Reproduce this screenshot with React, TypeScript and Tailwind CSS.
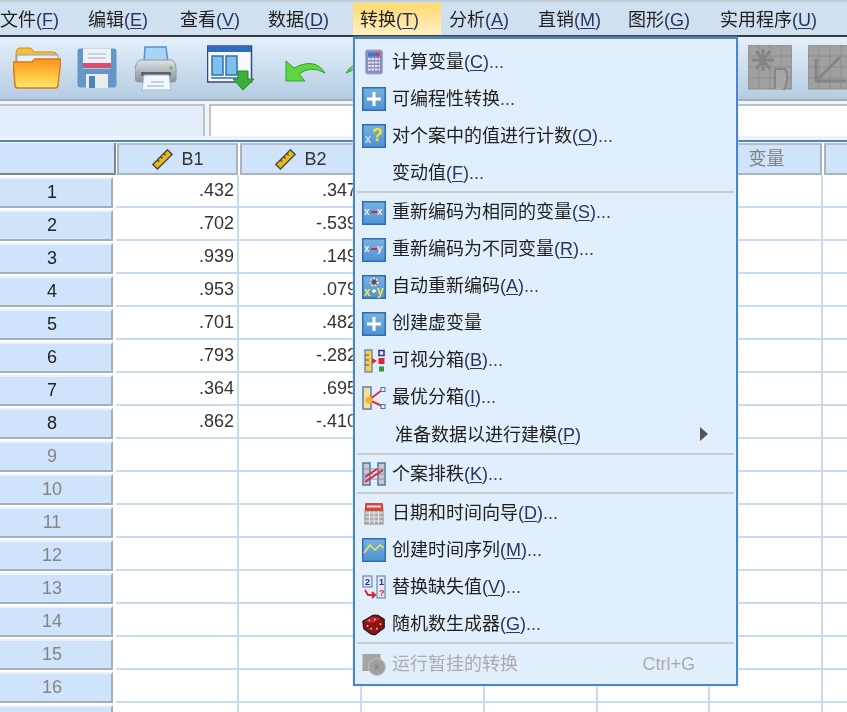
import type { ReactNode } from "react";

const FONT = "font-['Liberation_Sans','Noto_Sans_CJK_SC',sans-serif]";

const menus = [
  { label: "文件", key: "F", cls: "w-[88px]" },
  { label: "编辑", key: "E", cls: "w-[92px]" },
  { label: "查看", key: "V", cls: "w-[88px]" },
  { label: "数据", key: "D", cls: "w-[92px]" },
  { label: "转换", key: "T", cls: "w-[88px] mr-px bg-gradient-to-b from-[#ffd968] to-[#fff0c4]" },
  { label: "分析", key: "A", cls: "w-[89px]" },
  { label: "直销", key: "M", cls: "w-[90px]" },
  { label: "图形", key: "G", cls: "w-[92px]" },
  { label: "实用程序", key: "U", cls: "w-[130px]" },
];

const data = [
  [".432", ".347"],
  [".702", "-.539"],
  [".939", ".149"],
  [".953", ".079"],
  [".701", ".482"],
  [".793", "-.282"],
  [".364", ".695"],
  [".862", "-.410"],
];

const rows = Array.from({ length: 17 }, (_, i) => i + 1);

// toolbar drawings
function FolderIcon() {
  return (
    <svg width="48" height="44" viewBox="0 0 48 44" className="shrink-0">
      <path d="M3 8 Q3 2 7 2 H18 L21 6 H40 Q44 6 44 10 V18 H3Z" fill="#f9bd3a" stroke="#d48a1c" />
      <rect x="4" y="9" width="41" height="14" fill="#e8f0fa" stroke="#7fa6d0" />
      <path d="M0 16 H19 L22 13 H48 L45 39 Q45 42 42 42 H5 Q2 42 2 39Z" fill="url(#folderFill)" stroke="#dc7a10" strokeWidth="1.5" />
    </svg>
  );
}

function SaveIcon() {
  return (
    <svg width="40" height="40" viewBox="0 0 40 40" className="shrink-0">
      <rect x="0.5" y="0.5" width="39" height="39" rx="3" fill="#6496c8" />
      <rect x="6" y="0.5" width="28" height="20" fill="#eef2f6" />
      <rect x="6" y="15" width="28" height="5" fill="#d9506f" />
      <path d="M11 6 H29 M11 10 H29" stroke="#c0c8d0" strokeWidth="1.5" />
      <rect x="9" y="26" width="22" height="14" fill="#e8edf2" />
      <rect x="12" y="28" width="6" height="12" fill="#4f82b5" />
    </svg>
  );
}

function PrinterIcon() {
  return (
    <svg width="42" height="47" viewBox="0 0 42 47" className="shrink-0">
      <path d="M9 18 L10 2 H31 L33 18Z" fill="#a9d4f5" stroke="#4d94d6" strokeWidth="1.5" />
      <path d="M5 15 H37 Q41 17 41 24 V35 Q41 37 38 37 H4 Q0 37 0 33 V24 Q1 17 5 15Z" fill="url(#printerFill)" stroke="#8f979e" />
      <circle cx="36" cy="23" r="1.8" fill="#55c45e" />
      <rect x="6" y="27" width="30" height="4" fill="#59636b" />
      <path d="M9 30 H34 L36 45 H7Z" fill="#f3f7fb" stroke="#aab6c2" />
      <path d="M16 37 H29 M12 41 H29" stroke="#a6c4e2" strokeWidth="1.5" />
    </svg>
  );
}

function DataEditorIcon() {
  return (
    <svg width="47" height="46" viewBox="0 0 47 46" className="shrink-0">
      <rect x="0.5" y="1" width="44" height="36" fill="#f7f9fd" stroke="#3a4686" strokeWidth="1.5" />
      <rect x="1" y="1" width="43" height="6" fill="#2f6cc0" />
      <rect x="5" y="11" width="11" height="19" fill="#7dc0ec" stroke="#2f6cc0" strokeWidth="1.5" />
      <rect x="19" y="11" width="11" height="19" fill="#7dc0ec" stroke="#2f6cc0" strokeWidth="1.5" />
      <path d="M4 33 H33" stroke="#2f6cc0" strokeWidth="1.5" />
      <path d="M31 26 H41 V34 H47 L36 45 L26 34 H31Z" fill="#3cae3c" stroke="#1f8a2a" />
    </svg>
  );
}

function UndoIcon() {
  return (
    <svg width="41" height="24" viewBox="0 0 41 24" className="shrink-0">
      <path d="M1 3 L1 23 H20 L14 16 Q26 7 40 15 Q30 -1 9 10Z" fill="#5fd63f" stroke="#2da32f" />
    </svg>
  );
}

function RedoIcon() {
  return (
    <svg width="41" height="24" viewBox="0 0 41 24" className="shrink-0">
      <path d="M40 3 L40 23 H21 L27 16 Q15 7 1 15 Q11 -1 32 10Z" fill="#5fd63f" stroke="#2da32f" />
    </svg>
  );
}

function GreyGridIcon({ children }: { children: ReactNode }) {
  return (
    <svg width="44" height="46" viewBox="0 0 44 46" className="shrink-0">
      <rect x="0" y="0" width="44" height="44" fill="#a0a0a0" stroke="#8c8c8c" />
      <path d="M0 11 H44 M0 22 H44 M0 33 H44 M11 0 V44 M22 0 V44 M33 0 V44" stroke="#8e8e8e" />
      {children}
    </svg>
  );
}

function RulerIcon() {
  return (
    <svg width="22" height="24" viewBox="0 0 24 24" className="shrink-0">
      <path d="M2 18 L18 2 L23 7 L7 23Z" fill="#e8b820" stroke="#4a4a38" strokeWidth="1.5" />
      <path d="M7 13 L9 15 M10.5 9.5 L12.5 11.5 M14 6 L16 8" stroke="#4a4a38" strokeWidth="1.5" />
    </svg>
  );
}

// menu drawings
function Calculator() {
  return (
    <svg width="24" height="26" viewBox="0 0 24 26">
      <rect x="3.5" y="1" width="17" height="24" rx="2" fill="#8d8cc0" stroke="#a9a8d0" />
      <rect x="6" y="3.5" width="12" height="4" fill="#3e78c8" />
      <rect x="14" y="4" width="4" height="3" fill="#d84050" />
      <path d="M6 10 H18 M6 13.5 H18 M6 17 H18 M6 20.5 H18" stroke="#e6e6f4" strokeWidth="2" strokeDasharray="2.5 1" />
    </svg>
  );
}

function BlueBox({ children }: { children?: ReactNode }) {
  return (
    <svg width="24" height="24" viewBox="0 0 24 24">
      <rect x="0.75" y="0.75" width="22.5" height="22.5" fill="url(#boxFill)" stroke="#2e6db8" strokeWidth="1.5" />
      {children}
    </svg>
  );
}

const plus = <path d="M12 5 V19 M5 12 H19" stroke="#ffffff" strokeWidth="3" />;

function Label({ x, y, fill, size, bold, children }: { x: number; y: number; fill: string; size: number; bold?: boolean; children: ReactNode }) {
  return (
    <text x={x} y={y} fill={fill} fontSize={size} fontWeight={bold ? 700 : 400} fontFamily="Liberation Sans">
      {children}
    </text>
  );
}

function VisualBin() {
  return (
    <svg width="24" height="24" viewBox="0 0 24 24">
      <rect x="3" y="1" width="7" height="22" fill="#f2cf4e" stroke="#7c8ba6" strokeWidth="1.5" />
      <path d="M3 6 H7 M3 11 H7 M3 16 H7" stroke="#555555" />
      <path d="M10 9 L15 12 L10 15Z" fill="#d8283c" />
      <rect x="17" y="1.5" width="5" height="5" fill="none" stroke="#24309a" strokeWidth="1.5" />
      <rect x="16.5" y="9" width="6" height="6" fill="#d8283c" />
      <rect x="17" y="17.5" width="5" height="5" fill="#2f9a40" />
    </svg>
  );
}

function OptimalBin() {
  return (
    <svg width="24" height="24" viewBox="0 0 24 24">
      <rect x="1" y="1" width="8" height="22" fill="#f4e29a" stroke="#5a7ea8" strokeWidth="1.5" />
      <path d="M7 14 L20 4 M7 14 L20 20" stroke="#e0303c" strokeWidth="2" />
      <circle cx="7" cy="14" r="3.5" fill="#ffb020" />
      <rect x="19" y="1.5" width="4" height="4" fill="#e1eefb" stroke="#4a78b0" />
      <rect x="19" y="18.5" width="4" height="4" fill="#e1eefb" stroke="#4a78b0" />
    </svg>
  );
}

function CaseRank() {
  return (
    <svg width="24" height="24" viewBox="0 0 24 24">
      <rect x="1" y="1" width="7" height="22" fill="#c8c8d0" stroke="#4f78a8" strokeWidth="1.5" />
      <rect x="16" y="1" width="7" height="22" fill="#c8c8d0" stroke="#4f78a8" strokeWidth="1.5" />
      <path d="M1 7 H23 M1 12 H23 M1 17 H23" stroke="#8896a8" />
      <path d="M3 20 L21 8 M3 15 L15 7" stroke="#d8283c" strokeWidth="2" />
    </svg>
  );
}

function CalendarIcon() {
  return (
    <svg width="24" height="24" viewBox="0 0 24 24">
      <rect x="3" y="8" width="18" height="15" fill="#aeaeae" stroke="#8a8a8a" />
      <path d="M3 12 H21 M3 16 H21 M3 20 H21 M7.5 9 V23 M12 9 V23 M16.5 9 V23" stroke="#e8e8e8" />
      <rect x="3" y="2" width="18" height="8" rx="1" fill="#d8463c" />
      <rect x="5" y="4.5" width="14" height="2" fill="#ffd8d0" />
    </svg>
  );
}

function ReplaceIcon() {
  return (
    <svg width="24" height="24" viewBox="0 0 24 24">
      <rect x="1" y="1" width="9" height="11" fill="#dfe8f4" stroke="#4f78a8" />
      <rect x="15" y="1" width="8" height="22" fill="#dfe8f4" stroke="#4f78a8" />
      <Label x={3} y={10} fill="#20308a" size={9} bold>2</Label>
      <Label x={17} y={10} fill="#20308a" size={9} bold>1</Label>
      <Label x={17} y={21} fill="#d8283c" size={9} bold>?</Label>
      <path d="M3 15 L6 20 H13 M10 17 L13 20 L10 23" fill="none" stroke="#e02030" strokeWidth="2" />
    </svg>
  );
}

function DiceIcon() {
  return (
    <svg width="26" height="24" viewBox="0 0 26 24">
      <path d="M1 8 L11 2 Q14 1 18 2 L24 6 L24 15 L15 22 Q12 23 9 21 L2 16Z" fill="#8e1414" stroke="#2a1a1a" strokeWidth="1.5" />
      <path d="M3 8 L11 3 L20 5 L12 10Z" fill="#c02626" />
      <g fill="#f0c8c8">
        <circle cx="8" cy="7" r="1" />
        <circle cx="14" cy="6" r="1" />
        <circle cx="6" cy="13" r="1" />
        <circle cx="10" cy="16" r="1" />
        <circle cx="16" cy="16" r="1" />
        <circle cx="20" cy="11" r="1" />
      </g>
    </svg>
  );
}

function PendingIcon() {
  return (
    <svg width="24" height="24" viewBox="0 0 24 24">
      <rect x="0.5" y="1" width="18" height="17" fill="#a4a4a4" />
      <circle cx="15" cy="14" r="8.5" fill="#a0a0a0" stroke="#c4c4c4" />
      <path d="M13 10 L18 14 L13 18Z" fill="#8c8c8c" />
    </svg>
  );
}

type Item = { label: string; hot?: string; dots?: boolean; icon?: ReactNode; sep?: boolean; cls?: string };

const menuItems: Item[] = [
  { label: "计算变量", hot: "C", dots: true, icon: <Calculator /> },
  { label: "可编程性转换", dots: true, icon: <BlueBox>{plus}</BlueBox> },
  {
    label: "对个案中的值进行计数",
    hot: "O",
    dots: true,
    icon: (
      <BlueBox>
        <Label x={3} y={19} fill="#e6eef6" size={12}>x</Label>
        <Label x={10} y={17} fill="#f8e820" size={18} bold>?</Label>
      </BlueBox>
    ),
  },
  { label: "变动值", hot: "F", dots: true },
  { sep: true, label: "" },
  {
    label: "重新编码为相同的变量",
    hot: "S",
    dots: true,
    icon: (
      <BlueBox>
        <Label x={2} y={14} fill="#e6eef6" size={10} bold>x</Label>
        <path d="M9 11 H15" stroke="#d8283c" strokeWidth="2" />
        <Label x={15} y={14} fill="#e6eef6" size={10} bold>x</Label>
      </BlueBox>
    ),
  },
  {
    label: "重新编码为不同变量",
    hot: "R",
    dots: true,
    icon: (
      <BlueBox>
        <Label x={2} y={14} fill="#e6eef6" size={10} bold>x</Label>
        <path d="M9 11 H15" stroke="#d8283c" strokeWidth="2" />
        <Label x={15} y={14} fill="#e6eef6" size={10} bold>y</Label>
      </BlueBox>
    ),
  },
  {
    label: "自动重新编码",
    hot: "A",
    dots: true,
    icon: (
      <BlueBox>
        <circle cx="12" cy="7" r="3.5" fill="#555555" stroke="#e4e4e4" strokeWidth="2" strokeDasharray="2 1" />
        <Label x={2} y={21} fill="#f4e84a" size={12} bold>x</Label>
        <path d="M10 16 H14 M12 14 V18" stroke="#ffffff" strokeWidth="1.5" />
        <Label x={15} y={20} fill="#f4e84a" size={12} bold>y</Label>
      </BlueBox>
    ),
  },
  { label: "创建虚变量", icon: <BlueBox>{plus}</BlueBox> },
  { label: "可视分箱", hot: "B", dots: true, icon: <VisualBin /> },
  { label: "最优分箱", hot: "I", dots: true, icon: <OptimalBin /> },
  { label: "准备数据以进行建模", hot: "P", cls: "ml-[3px]" },
  { sep: true, label: "" },
  { label: "个案排秩", hot: "K", dots: true, icon: <CaseRank /> },
  { sep: true, label: "" },
  { label: "日期和时间向导", hot: "D", dots: true, icon: <CalendarIcon /> },
  {
    label: "创建时间序列",
    hot: "M",
    dots: true,
    icon: (
      <BlueBox>
        <path d="M2 15 L8 7 L13 12 L18 7 L22 10" fill="none" stroke="#f4e84a" strokeWidth="1.5" />
      </BlueBox>
    ),
  },
  { label: "替换缺失值", hot: "V", dots: true, icon: <ReplaceIcon /> },
  { label: "随机数生成器", hot: "G", dots: true, icon: <DiceIcon /> },
  { sep: true, label: "" },
];

function Hot({ k }: { k: string }) {
  return (
    <span className="text-[#2a3560]">
      (<u className="underline-offset-2">{k}</u>)
    </span>
  );
}

function TransformMenu() {
  return (
    <div className="absolute left-[353px] top-[37px] w-[385px] h-[649px] bg-[#e1eefb] border-2 border-[#4a86c9] pt-[3.6px] flex flex-col shadow-[0_0_2px_#c5d8ee]">
      {menuItems.map((item, i) =>
        item.sep ? (
          <div key={i} className="h-[2px] mx-[2px] bg-[#c9ccd0] shrink-0" />
        ) : (
          <div key={i} className="h-[37.1px] shrink-0 pt-[2px] flex items-center pl-[7px] text-[18px] text-[#1f1f1f] whitespace-nowrap">
            <span className="w-6 h-6 mr-[6px] flex items-center justify-center shrink-0">{item.icon}</span>
            <span className={item.cls}>
              {item.label}
              {item.hot && <Hot k={item.hot} />}
              {item.dots && <span className="text-[#444444]">...</span>}
            </span>
            {item.hot === "P" && (
              <span className="ml-auto mr-[28px] -mt-[3px] w-0 h-0 border-y-[7px] border-y-transparent border-l-[8px] border-l-[#555555]" />
            )}
          </div>
        ),
      )}
      <div className="h-[37.1px] shrink-0 pt-[4px] flex items-center pl-[7px] text-[18px] text-[#ababab] whitespace-nowrap">
        <span className="w-6 h-6 mr-[6px] flex items-center justify-center shrink-0">
          <PendingIcon />
        </span>
        运行暂挂的转换
        <span className="ml-auto mr-[41px]">Ctrl+G</span>
      </div>
    </div>
  );
}

function ColumnHeader({ width, children }: { width: string; children?: ReactNode }) {
  return (
    <div className={`${width} shrink-0 h-full pl-px pr-[1px]`}>
      <div className="h-full flex items-center justify-center gap-2 bg-[#cfe3fa] border-2 border-[#aab4be] border-t-[#b4bcc6] text-[18px] text-[#333333]">
        {children}
      </div>
    </div>
  );
}

export default function App() {
  return (
    <div className={`relative w-[847px] h-[712px] overflow-hidden bg-white blur-[0.4px] ${FONT}`}>
      <svg className="absolute w-0 h-0">
        <defs>
          <linearGradient id="folderFill" x1="0" y1="0" x2="0" y2="1">
            <stop offset="0" stopColor="#fb9420" />
            <stop offset="0.55" stopColor="#ffc23e" />
            <stop offset="1" stopColor="#ffe874" />
          </linearGradient>
          <linearGradient id="printerFill" x1="0" y1="0" x2="0" y2="1">
            <stop offset="0" stopColor="#dfe3e6" />
            <stop offset="1" stopColor="#878f96" />
          </linearGradient>
          <linearGradient id="boxFill" x1="0" y1="0" x2="0" y2="1">
            <stop offset="0" stopColor="#7ab0e0" />
            <stop offset="1" stopColor="#4f93d2" />
          </linearGradient>
        </defs>
      </svg>

      {/* Menu bar */}
      <div className="h-[37px] pt-px bg-[#cfe0f1] border-t-2 border-[#c2ccd6] border-b-2 border-b-[#33383d] flex -ml-[7px]">
        {menus.map((m) => (
          <div key={m.key} className={`${m.cls} shrink-0 h-full pt-[2px] pl-[7px] flex items-center text-[18px] text-[#1f1f1f] whitespace-nowrap`}>
            {m.label}
            <Hot k={m.key} />
          </div>
        ))}
      </div>

      {/* Toolbar */}
      <div className="h-[64px] bg-gradient-to-b from-[#e6f0fb] to-[#b4cce2] border-b-2 border-[#a6adb4] flex items-center pl-[13px]">
        <FolderIcon />
        <div className="ml-4 shrink-0"><SaveIcon /></div>
        <div className="ml-[18px] shrink-0"><PrinterIcon /></div>
        <div className="ml-[30px] shrink-0"><DataEditorIcon /></div>
        <div className="ml-[31px] mt-[4px] shrink-0"><UndoIcon /></div>
        <div className="ml-[19px] mt-[4px] shrink-0"><RedoIcon /></div>
        <div className="ml-[362px] shrink-0">
          <GreyGridIcon>
            <path d="M8 6 L22 24 M22 6 L8 24 M15 4 V26 M4 15 H26" stroke="#858585" strokeWidth="3" />
            <path d="M27 44 V24 H37 Q42 32 36 45" fill="#a6a6a6" stroke="#858585" strokeWidth="2" />
          </GreyGridIcon>
        </div>
        <div className="ml-4 shrink-0">
          <GreyGridIcon>
            <path d="M8 14 V36 H38 M10 34 L32 12" fill="none" stroke="#858585" strokeWidth="3" />
          </GreyGridIcon>
        </div>
      </div>

      {/* Formula bar */}
      <div className="h-[39px] pt-[3px] flex bg-[#eef4fc]">
        <div className="w-[205px] h-[32px] bg-[#e3eefa] border-t-2 border-r-2 border-[#bcc2c8]" />
        <div className="ml-[4px] flex-1 h-[32px] bg-white border-t-2 border-l-2 border-[#bcc2c8]" />
      </div>
      <div className="h-[2px] bg-[#4a86c9]" />

      {/* Grid header */}
      <div className="h-[33px] pt-px flex">
        <div className="w-[116px] shrink-0 bg-[#cfe3fa] border-r-2 border-b-2 border-[#7d868f]" />
        <ColumnHeader width="w-[123px]"><RulerIcon />B1</ColumnHeader>
        <ColumnHeader width="w-[123px]"><RulerIcon />B2</ColumnHeader>
        <ColumnHeader width="w-[123px]"><span className="text-[#808080]">变量</span></ColumnHeader>
        <ColumnHeader width="w-[113px]"><span className="text-[#808080]">变量</span></ColumnHeader>
        <ColumnHeader width="w-[112px]"><span className="text-[#808080]">变量</span></ColumnHeader>
        <ColumnHeader width="w-[113px]"><span className="text-[#808080]">变量</span></ColumnHeader>
        <ColumnHeader width="w-[113px]" />
      </div>

      {/* Grid rows */}
      {rows.map((n) => (
        <div key={n} className="h-[33px] flex text-[18px] text-[#333333]">
          <div className="w-[116px] shrink-0 pr-[3px] pt-[2px] h-full">
            <div className={`h-full pr-[7px] flex items-center justify-center bg-[#cfe3fa] border-2 border-l-0 border-[#a6afb9] border-t-[#eaf2fb] ${n <= 8 ? "text-[#222222]" : "text-[#858585]"}`}>
              {n}
            </div>
          </div>
          {["w-[123px]", "w-[123px]", "w-[123px]", "w-[113px]", "w-[112px]", "w-[113px]", "w-[113px]"].map((w, c) => (
            <div
              key={c}
              className={`${w} shrink-0 h-full flex items-center justify-end pr-[3px] border-r-2 border-b-2 border-[#c7dbf1]`}
            >
              {c < 2 && n <= 8 ? data[n - 1][c] : ""}
            </div>
          ))}
        </div>
      ))}

      <TransformMenu />
    </div>
  );
}
